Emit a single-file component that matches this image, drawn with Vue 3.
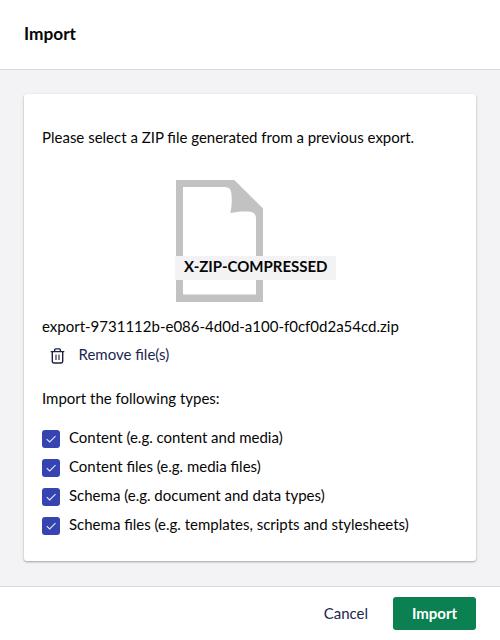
<script setup>
const types = [
  'Content (e.g. content and media)',
  'Content files (e.g. media files)',
  'Schema (e.g. document and data types)',
  'Schema files (e.g. templates, scripts and stylesheets)',
]
</script>

<template>
  <div class="modal">
    <header class="head">Import</header>
    <main class="body">
      <section class="card">
        <p class="intro">Please select a ZIP file generated from a previous export.</p>
        <div class="file">
          <svg class="doc" width="87" height="122" viewBox="0 0 87 122">
            <path fill="#c2c2c2" fill-rule="evenodd" d="M0 0H58.3L87 28.5V122H0ZM7 7V114.5H80V39C80 34 78 32.3 74 31.8C68 31 61 31.5 54.3 33C56 26 56 19 55.3 13C54.7 9 53 7 48 7Z" />
          </svg>
          <span class="tag">X-ZIP-COMPRESSED</span>
        </div>
        <p class="name">export-9731112b-e086-4d0d-a100-f0cf0d2a54cd.zip</p>
        <button class="remove">
          <svg width="15" height="16" viewBox="0 0 15 16" fill="none" stroke="#1d2443" stroke-linejoin="round">
            <path stroke-width="1.4" d="M0.7 3.6H14.3M4.6 3.4V2Q4.6 0.9 5.7 0.9H9.3Q10.4 0.9 10.4 2V3.4M2.3 4V13.6Q2.3 15 3.7 15H11.3Q12.7 15 12.7 13.6V4" />
            <path stroke-width="1.1" d="M6 6.5V12M9 6.5V12" />
          </svg>
          Remove file(s)
        </button>
        <p class="sub">Import the following types:</p>
        <ul class="types">
          <li v-for="t in types" :key="t">
            <span class="box">
              <svg width="18" height="18" viewBox="0 0 18 18" fill="none" stroke="#e6e8f7" stroke-width="1.1"><path d="M4.7 9.2L7.7 12L13.5 6.2" /></svg>
            </span>{{ t }}
          </li>
        </ul>
      </section>
    </main>
    <footer class="foot">
      <button class="cancel">Cancel</button>
      <button class="import">Import</button>
    </footer>
  </div>
</template>

<style>
body { margin: 0; }
</style>
<style scoped>
* { box-sizing: border-box; }
.modal { width: 500px; height: 640px; display: flex; flex-direction: column; background: #f3f3f5; font: 15px/20px Lato, sans-serif; color: #060606; }
.head { height: 70px; padding: 24px; background: #fff; border-bottom: 1px solid #d8d7d9; font-size: 17.25px; font-weight: 700; }
.body { flex: 1; padding: 24px; }
.card { height: 467px; padding: 33px 18px 0; background: #fff; border-radius: 3px; box-shadow: 0 1px 3px rgba(0,0,0,.12), 0 1px 2px rgba(0,0,0,.24); }
p { margin: 0; white-space: nowrap; }
.file { display: grid; width: 161px; height: 122px; margin: 33px 0 0 133px; }
.doc, .tag { grid-area: 1 / 1; }
.doc { margin-left: 1px; }
.tag { align-self: start; width: 161px; margin-top: 76px; padding: 0 0 3px 9px; height: 24px; line-height: 21px; background: #f3f3f5; font-weight: 700; white-space: nowrap; }
.name { margin-top: 14px; }
button { border: 0; background: none; font: inherit; color: #1b264f; padding: 0; }
.remove { display: flex; align-items: center; gap: 13.5px; margin: 8px 0 0 8px; height: 20px; }
.remove svg { margin-top: 4px; }
.sub { margin-top: 24px; }
.types { list-style: none; margin: 19px 0 0; padding: 0; }
.types li { display: flex; align-items: flex-start; gap: 9px; height: 20px; margin-bottom: 9px; }
.box { width: 18px; height: 18px; margin-top: 3px; background: #3544b1; border-radius: 3px; }
.box svg { display: block; }
.foot { height: 54px; display: flex; justify-content: flex-end; align-items: flex-start; padding: 10px 24px 0 0; background: #fff; border-top: 1px solid #d8d7d9; }
.foot button { height: 33px; padding-bottom: 2px; }
.cancel { margin-right: 25px; }
.import { width: 83px; background: #0b8152; color: #fff; border-radius: 3px; font-weight: 700; }
</style>
